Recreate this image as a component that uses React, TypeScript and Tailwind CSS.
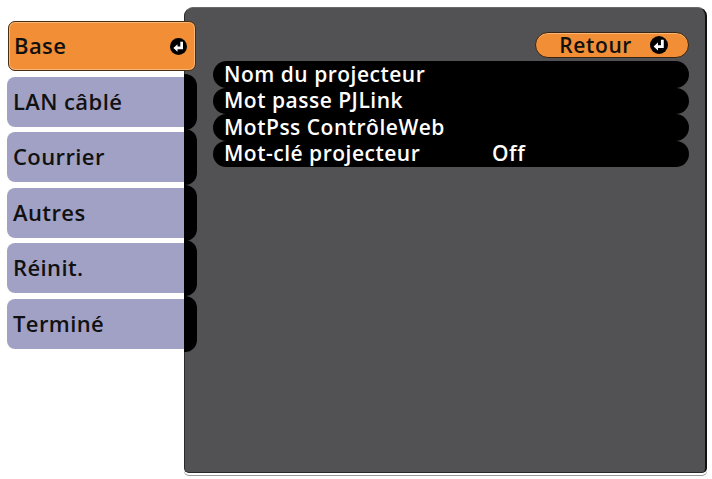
import React from "react";

function EnterIcon({ size = 14 }: { size?: number }) {
  return (
    <svg width={size} height={size} viewBox="0 0 14 14" className="shrink-0">
      <circle cx="7" cy="7" r="7" fill="#000" />
      <path d="M9.6 3.0 V8.2 H5.6" stroke="#fff" strokeWidth="2.2" fill="none" />
      <polygon points="2.8,8.2 6.2,5.1 6.2,11.3" fill="#fff" />
    </svg>
  );
}

const tabs = ["LAN câblé", "Courrier", "Autres", "Réinit.", "Terminé"];
const rows: [string, string][] = [
  ["Nom du projecteur", ""],
  ["Mot passe PJLink", ""],
  ["MotPss ContrôleWeb", ""],
  ["Mot-clé projecteur", "Off"],
];

export default function App() {
  return (
    <div
      className="w-[712px] h-[479px] bg-white flex overflow-hidden"
      style={{ fontFamily: '"Open Sans", "Noto Sans", sans-serif' }}
    >
      {/* Left menu */}
      <div className="relative z-10 w-[190px] ml-[7px] pt-[21px] flex flex-col gap-[5.5px] shrink-0">
        <div className="h-[50px] ml-[1px] w-[188px] rounded-[7px] bg-[#f28e35] border border-[#4a2e12] shadow-[inset_0_0_0_1px_#f7b77a] flex items-center justify-between pl-[5px] pr-[8px]">
          <span className="text-[22px] font-semibold text-[#111] tracking-[0.4px] leading-none -mt-[2px]">Base</span>
          <EnterIcon size={17} />
        </div>
        {tabs.map((t) => (
          <div key={t} className="h-[50px] flex">
            <div className="flex-1 bg-[#a1a1c5] rounded-l-[8px] flex items-center pl-[6px]">
              <span className="text-[22px] font-semibold text-[#111] tracking-[0.4px] leading-none -mt-[2px]">{t}</span>
            </div>
            <div className="w-[13px] -my-[3px] bg-black rounded-r-[12px]" />
          </div>
        ))}
      </div>

      {/* Panel */}
      <div className="-ml-[13px] mt-[7px] w-[523px] h-[466px] bg-[#525254] rounded-t-[9px] rounded-b-[5px] border border-[#2a2a2a] border-t-[#6a6a6a] border-r-2 border-r-[#111] shadow-[0_2px_0_#ffffff,0_3px_0_#9a9a9a] flex flex-col">
        <div className="flex justify-end pr-[16px] pt-[24px]">
          <div className="w-[154px] h-[26px] rounded-full bg-[#f28e35] border border-[#3a2510] shadow-[inset_0_1px_0_#f7b77a] flex items-center justify-end pr-[20px] gap-[18px]">
            <span className="text-[21px] font-semibold text-[#111] tracking-[0.6px] leading-none">Retour</span>
            <EnterIcon size={18} />
          </div>
        </div>
        <div className="ml-[28px] mt-[3px] w-[476px] flex flex-col">
          {rows.map(([label, value]) => (
            <div key={label} className="h-[26.5px] bg-black rounded-full flex items-center pl-[11px]">
              <span className="w-[268px] text-[21px] font-semibold text-white tracking-[0.5px] leading-none">{label}</span>
              <span className="text-[21px] font-semibold text-white tracking-[0.5px] leading-none">{value}</span>
            </div>
          ))}
        </div>
      </div>
    </div>
  );
}
